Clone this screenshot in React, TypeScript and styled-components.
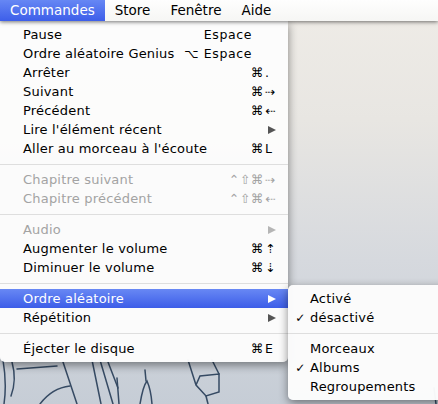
import styled, { createGlobalStyle } from "styled-components";

const GlobalStyle = createGlobalStyle`
  html, body {
    margin: 0;
    padding: 0;
  }
  body {
    width: 438px;
    height: 404px;
    overflow: hidden;
  }
`

const Screen = styled.div`
  position: relative;
  width: 438px;
  height: 404px;
  overflow: hidden;
  font-family: "DejaVu Sans", "Liberation Sans", sans-serif;
  background: linear-gradient(to bottom, #efece7 0px, #e8e6e2 120px, #d6d9de 260px, #c6cdd6 404px);
`

const Art = styled.svg`
  position: absolute;
  left: 0;
  top: 0;
  z-index: 0;
`

// MENU BAR

const MenuBar = styled.div`
  position: relative;
  z-index: 3;
  display: flex;
  height: 21px;
  background: linear-gradient(#fefefe, #f6f6f4);
  box-shadow: 0 1px 4px rgba(0, 0, 0, 0.55);
`

const MenuTitle = styled.div<{ $active?: boolean }>`
  padding: 0 10px;
  line-height: 21px;
  font-size: 13.5px;
  color: ${p => p.$active ? "#fff" : "#000"};
  background: ${p => p.$active ? "linear-gradient(#6687f4, #3d5ee9)" : "transparent"};
`

// MENUS

const MenuArea = styled.div`
  position: relative;
  z-index: 2;
  display: flex;
  align-items: flex-start;
`

const MainMenu = styled.div`
  width: 288px;
  padding: 4px 0;
  background: rgba(252, 252, 252, 0.97);
  border-radius: 0 0 5px 5px;
  box-shadow: 0 3px 10px rgba(0, 0, 0, 0.45);
`

const SubMenu = styled.div`
  position: relative;
  z-index: 1;
  flex: 1;
  margin-top: 264px;
  margin-right: -20px;
  padding: 4px 0;
  background: rgba(252, 252, 252, 0.97);
  border-radius: 5px;
  box-shadow: 0 3px 10px rgba(0, 0, 0, 0.45);
`

const Item = styled.div<{ $active?: boolean, $disabled?: boolean }>`
  display: flex;
  align-items: center;
  height: 19px;
  padding: 0 9px 0 23px;
  font-size: 13px;
  letter-spacing: 0.2px;
  white-space: nowrap;
  color: ${p => p.$active ? "#fff" : p.$disabled ? "#a3a3a3" : "#000"};
  background: ${p => p.$active ? "linear-gradient(#6888f4, #3c5de8)" : "transparent"};
`

const Label = styled.span`
  flex: 1;
`

const Mods = styled.span<{ $inset?: number }>`
  text-align: right;
  padding-right: ${p => p.$inset || 0}px;
  font-size: 12.5px;
  letter-spacing: 0.6px;
`

const KeyCol = styled.span`
  display: flex;
  align-items: center;
  width: 14px;
  padding-left: 1px;
  font-size: 12.5px;
`

const Arrow = styled.span<{ $color: string }>`
  margin-left: 3px;
  width: 0;
  height: 0;
  border-left: 8px solid ${p => p.$color};
  border-top: 4.5px solid transparent;
  border-bottom: 4.5px solid transparent;
`

const Separator = styled.div`
  height: 12px;
  display: flex;
  align-items: center;

  &::after {
    content: "";
    flex: 1;
    height: 1px;
    background: #dedede;
  }
`

const SubItem = styled.div`
  display: flex;
  align-items: center;
  height: 19px;
  padding-left: 3px;
  font-size: 13px;
  letter-spacing: 0.2px;
  color: #000;
  white-space: nowrap;
`

const Check = styled.span`
  width: 19px;
  text-align: center;
  font-size: 12px;
`

type Entry =
  | { sep: true }
  | { label: string, mods?: string, keyName?: string, inset?: number, sub?: boolean, disabled?: boolean, active?: boolean }

const entries: Entry[] = [
  { label: "Pause", mods: "Espace", inset: 27 },
  { label: "Ordre aléatoire Genius", mods: "⌥ Espace", inset: 27 },
  { label: "Arrêter", mods: "⌘", keyName: "." },
  { label: "Suivant", mods: "⌘", keyName: "⇢" },
  { label: "Précédent", mods: "⌘", keyName: "⇠" },
  { label: "Lire l'élément récent", sub: true },
  { label: "Aller au morceau à l'écoute", mods: "⌘", keyName: "L" },
  { sep: true },
  { label: "Chapitre suivant", mods: "⌃⇧⌘", keyName: "⇢", disabled: true },
  { label: "Chapitre précédent", mods: "⌃⇧⌘", keyName: "⇠", disabled: true },
  { sep: true },
  { label: "Audio", sub: true, disabled: true },
  { label: "Augmenter le volume", mods: "⌘", keyName: "⇡" },
  { label: "Diminuer le volume", mods: "⌘", keyName: "⇣" },
  { sep: true },
  { label: "Ordre aléatoire", sub: true, active: true },
  { label: "Répétition", sub: true },
  { sep: true },
  { label: "Éjecter le disque", mods: "⌘", keyName: "E" },
]

const subEntries: ({ sep: true } | { label: string, checked?: boolean })[] = [
  { label: "Activé" },
  { label: "désactivé", checked: true },
  { sep: true },
  { label: "Morceaux" },
  { label: "Albums", checked: true },
  { label: "Regroupements" },
]

const BackgroundArt = () => (
  <Art width="438" height="404" viewBox="0 0 438 404">
    <g fill="none" stroke="#1d3450" strokeWidth="1.5" strokeLinecap="round" opacity="0.85">
      <path d="M3 360 Q7 384 4 404" />
      <path d="M12 362 Q17 380 11 396" />
      <path d="M17 369 L57 366" />
      <path d="M63 362 L77 404" />
      <path d="M40 404 Q52 388 70 386" />
      <path d="M92 360 L101 404" />
      <path d="M100 360 L113 404" />
      <path d="M108 362 L118 388" />
      <path d="M117 378 L119 404" />
      <path d="M140 404 Q143 386 147 381 Q151 390 152 404" />
      <path d="M145 370 L146 381" />
      <path d="M188 360 L196 385 L206 396 L219 392 L219 374 L200 376 L196 385" />
      <path d="M206 396 L208 404" />
      <path d="M212 360 L219 374" />
      <path d="M434 388 L436 404" />
    </g>
  </Art>
)

export default function App() {
  return (
    <Screen>
      <GlobalStyle />
      <BackgroundArt />
      <MenuBar>
        <MenuTitle $active>Commandes</MenuTitle>
        <MenuTitle>Store</MenuTitle>
        <MenuTitle>Fenêtre</MenuTitle>
        <MenuTitle>Aide</MenuTitle>
      </MenuBar>
      <MenuArea>
        <MainMenu>
          {entries.map((e, i) => {
            if ("sep" in e) return <Separator key={i} />
            const arrowColor = e.active ? "#fff" : e.disabled ? "#b5b5b5" : "#555"
            return (
              <Item key={i} $active={e.active} $disabled={e.disabled}>
                <Label>{e.label}</Label>
                {e.mods && <Mods $inset={e.inset}>{e.mods}</Mods>}
                {!e.inset && (
                  <KeyCol>
                    {e.sub ? <Arrow $color={arrowColor} /> : e.keyName}
                  </KeyCol>
                )}
              </Item>
            )
          })}
        </MainMenu>
        <SubMenu>
          {subEntries.map((e, i) => {
            if ("sep" in e) return <Separator key={i} />
            return (
              <SubItem key={i}>
                <Check>{e.checked ? "✓" : ""}</Check>
                <span>{e.label}</span>
              </SubItem>
            )
          })}
        </SubMenu>
      </MenuArea>
    </Screen>
  )
}
